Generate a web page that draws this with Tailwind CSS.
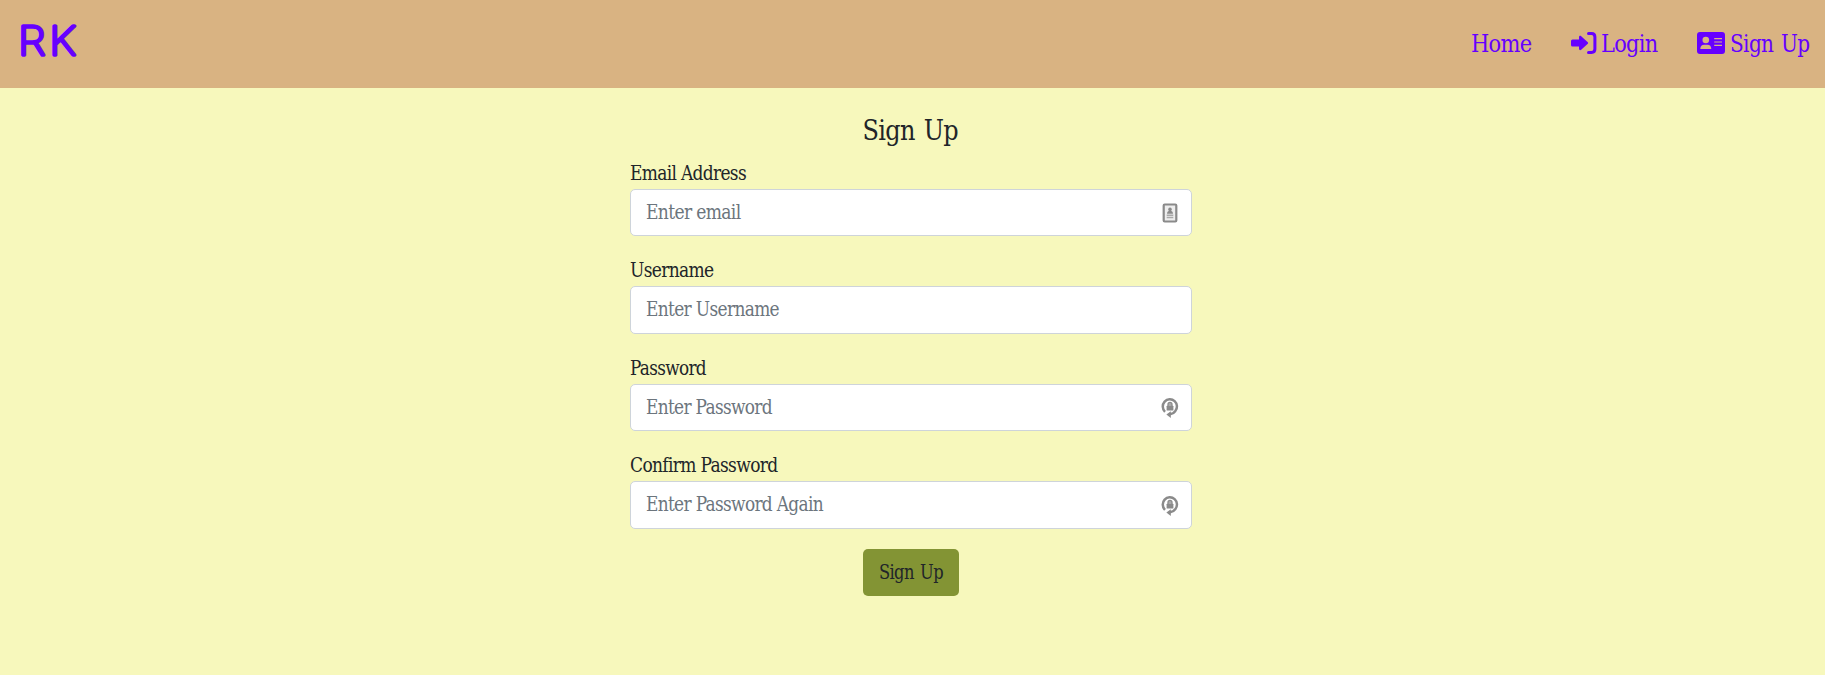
<!DOCTYPE html>
<html lang="en">
<head>
<meta charset="utf-8">
<title>Sign Up</title>
<script src="https://cdn.jsdelivr.net/npm/@tailwindcss/browser@4"></script>
</head>
<body class="h-screen overflow-hidden bg-[#f7f8bc] font-['DejaVu_Serif_Condensed','DejaVu_Serif',serif] text-[19.6px] tracking-[-0.035em] text-[#212529]">
<header class="flex h-[88px] items-start justify-between bg-[#d9b382] pl-[20px] pr-[15px] text-[23.5px] text-[#6600ff]">
  <svg class="mt-[24px] h-[33px] w-[58px] overflow-visible fill-current stroke-current font-['Inter',sans-serif] font-thin tracking-normal" stroke-width="3.6" stroke-linejoin="round" stroke-linecap="round"><text y="31" font-size="40"><tspan x="-2" textLength="27.5" lengthAdjust="spacingAndGlyphs">R</tspan><tspan x="29.3" textLength="26.5" lengthAdjust="spacingAndGlyphs">K</tspan></text></svg>
  <nav class="flex pt-[25px]">
    <a class="mr-[39px] flex"><svg class="h-[36px] w-[61px] overflow-visible fill-current"><text y="27" textLength="60.5" lengthAdjust="spacingAndGlyphs">Home</text></svg></a>
    <a class="mr-[39px] flex">
      <svg class="mt-[7px] h-[22px] w-[26px] fill-current" viewBox="0 0 26 22"><path d="M1.5 7.5H8V5.2C8 3.8 9.3 3.4 10.2 4.2L16.8 10.2Q17.5 11 16.8 11.8L10.2 17.8C9.3 18.6 8 18.2 8 16.8V14.4H1.5Q0 14.4 0 12.9V9Q0 7.5 1.5 7.5Z"/><path d="M17.5 1.6H20.5Q23.9 1.6 23.9 5V17Q23.9 20.4 20.5 20.4H17.5" fill="none" stroke="currentColor" stroke-width="3" stroke-linecap="round"/></svg>
      <svg class="ml-[4px] h-[36px] w-[57px] overflow-visible fill-current"><text x="0" y="27" textLength="56.5" lengthAdjust="spacingAndGlyphs">Login</text></svg></a>
    <a class="flex">
      <svg class="mt-[7px] h-[22px] w-[28px]" viewBox="0 0 28 22"><rect width="28" height="22" rx="3" fill="currentColor"/><g fill="#d9b382"><circle cx="8.8" cy="8" r="3.3"/><path d="M3.3 17Q3.5 12.8 7.2 12.8H10.4Q14 12.8 14.3 17Z"/><path d="M17.2 6H25V7.2H17.2ZM17.2 9.4H25V10.6H17.2ZM17.2 12.8H25V14H17.2Z"/></g></svg>
      <svg class="ml-[5px] h-[36px] w-[80px] overflow-visible fill-current"><text y="27" textLength="79.5" lengthAdjust="spacingAndGlyphs" word-spacing="2">Sign Up</text></svg></a>
  </nav>
</header>
<main class="ml-[630px] flex w-[562px] flex-col pt-[24px]">
  <svg class="mx-auto h-[47px] w-[96px] overflow-visible fill-current text-[27.4px]"><text y="28" x="-.5" textLength="95.5" lengthAdjust="spacingAndGlyphs" word-spacing="2">Sign Up</text></svg>
  <form class="flex flex-col">
    <label class="flex h-[30px]"><svg class="h-[30px] w-[117px] overflow-visible fill-current"><text y="21.4" textLength="116" lengthAdjust="spacingAndGlyphs">Email Address</text></svg></label>
    <div class="flex h-[47px] items-start justify-between rounded-[5px] border border-[#ced4da] bg-white pl-[15px] pr-[13px] text-[#6c757d]">
      <svg class="h-[45px] w-[95px] overflow-visible fill-current"><text y="29.3" textLength="94.5" lengthAdjust="spacingAndGlyphs">Enter email</text></svg>
      <svg class="mt-[13px] h-[20px] w-[16px] text-[#8a8a8a]" viewBox="0 0 16 20"><rect x="1.7" y="1.5" width="12.6" height="17" rx="1" fill="#eee" stroke="currentColor" stroke-width="2.2"/><circle cx="8" cy="6.4" r="1.8" fill="currentColor"/><path d="M5 10.7Q5.1 7.8 8 7.8T11 10.7Z" fill="currentColor"/><path d="M4.7 12.3H11.3M4.7 14.4H11.3" stroke="#aaa" stroke-width="1.5"/></svg>
    </div>
    <label class="mt-[20px] flex h-[30px]"><svg class="h-[30px] w-[84px] overflow-visible fill-current"><text y="21.4" textLength="83.5" lengthAdjust="spacingAndGlyphs">Username</text></svg></label>
    <div class="flex h-[48px] items-start rounded-[5px] border border-[#ced4da] bg-white pl-[15px] text-[#6c757d]">
      <svg class="h-[45px] w-[134px] overflow-visible fill-current"><text y="29.3" textLength="133" lengthAdjust="spacingAndGlyphs">Enter Username</text></svg>
    </div>
    <label class="mt-[20px] flex h-[30px]"><svg class="h-[30px] w-[77px] overflow-visible fill-current"><text y="21.4" textLength="76" lengthAdjust="spacingAndGlyphs">Password</text></svg></label>
    <div class="flex h-[47px] items-start justify-between rounded-[5px] border border-[#ced4da] bg-white pl-[15px] pr-[12px] text-[#6c757d]">
      <svg class="h-[45px] w-[127px] overflow-visible fill-current"><text y="29.3" textLength="126" lengthAdjust="spacingAndGlyphs">Enter Password</text></svg>
      <svg class="mt-[12px] h-[21px] w-[18px] text-[#8a8a8a]" viewBox="0 0 18 21"><path d="M4 14.8A7.1 7.3 0 1 1 14.2 14.3Q12.5 16.8 9 17.3" fill="none" stroke="currentColor" stroke-width="2.5"/><path d="M9.8 14.2V21L5.4 17.5Z" fill="currentColor"/><rect x="5.6" y="8.7" width="6.8" height="4.8" rx=".5" fill="currentColor"/><path d="M7 9V7.4A2 2 0 0 1 11 7.4V9" fill="#aaa" stroke="currentColor" stroke-width="1.3"/></svg>
    </div>
    <label class="mt-[20px] flex h-[30px]"><svg class="h-[30px] w-[149px] overflow-visible fill-current"><text y="21.4" textLength="147.5" lengthAdjust="spacingAndGlyphs">Confirm Password</text></svg></label>
    <div class="flex h-[48px] items-start justify-between rounded-[5px] border border-[#ced4da] bg-white pl-[15px] pr-[12px] text-[#6c757d]">
      <svg class="h-[45px] w-[178px] overflow-visible fill-current"><text y="29.3" textLength="177" lengthAdjust="spacingAndGlyphs">Enter Password Again</text></svg>
      <svg class="mt-[13px] h-[21px] w-[18px] text-[#8a8a8a]" viewBox="0 0 18 21"><path d="M4 14.8A7.1 7.3 0 1 1 14.2 14.3Q12.5 16.8 9 17.3" fill="none" stroke="currentColor" stroke-width="2.5"/><path d="M9.8 14.2V21L5.4 17.5Z" fill="currentColor"/><rect x="5.6" y="8.7" width="6.8" height="4.8" rx=".5" fill="currentColor"/><path d="M7 9V7.4A2 2 0 0 1 11 7.4V9" fill="#aaa" stroke="currentColor" stroke-width="1.3"/></svg>
    </div>
    <button type="button" class="mx-auto mt-[20px] flex h-[47px] w-[96px] justify-center rounded-[5px] bg-[#839434] tracking-[-0.035em]"><svg class="h-[47px] w-[65px] overflow-visible fill-current"><text y="30" textLength="64" lengthAdjust="spacingAndGlyphs" word-spacing="2">Sign Up</text></svg></button>
  </form>
</main>
</body>
</html>
